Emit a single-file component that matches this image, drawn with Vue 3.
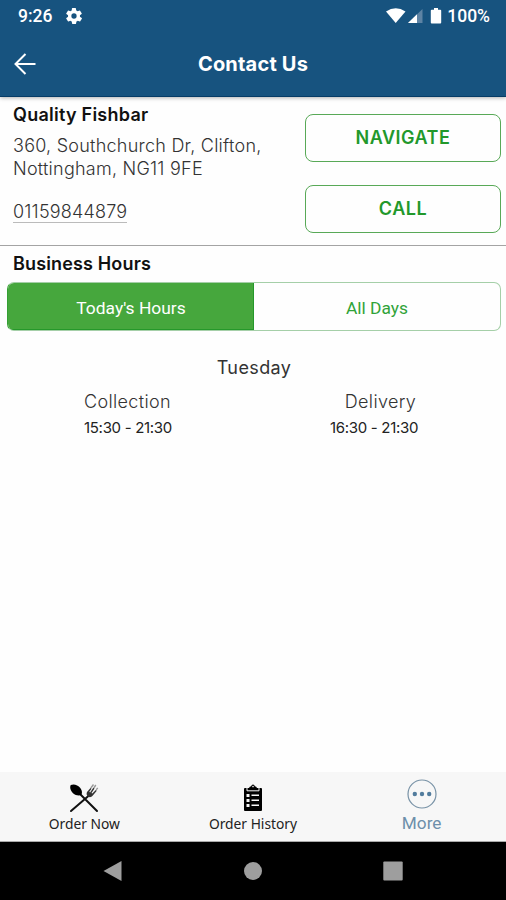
<script setup>
import { ref } from "vue"

const activeHours = ref("today")

const hours = [
  { label: "Collection", time: "15:30 - 21:30", key: "collection" },
  { label: "Delivery", time: "16:30 - 21:30", key: "delivery" },
]
</script>

<template>
  <div class="app">
    <header class="top">
      <div class="status">
        <span class="clock">9:26</span>
        <svg class="gear" viewBox="2 2 20 20">
          <path fill="#fff" fill-rule="evenodd" d="M19.4 13a7.5 7.5 0 0 0 0-2l2.1-1.6a.5.5 0 0 0 .1-.7l-2-3.4a.5.5 0 0 0-.6-.2l-2.5 1a7 7 0 0 0-1.7-1l-.4-2.6a.5.5 0 0 0-.5-.5h-4a.5.5 0 0 0-.5.5L9.2 5.1a7 7 0 0 0-1.7 1L5 5.1a.5.5 0 0 0-.6.2l-2 3.4a.5.5 0 0 0 .1.7L4.6 11a7.5 7.5 0 0 0 0 2l-2.1 1.6a.5.5 0 0 0-.1.7l2 3.4c.1.2.4.3.6.2l2.5-1a7 7 0 0 0 1.7 1l.4 2.6c0 .3.2.5.5.5h4c.3 0 .5-.2.5-.5l.4-2.6a7 7 0 0 0 1.7-1l2.5 1c.2.1.5 0 .6-.2l2-3.4a.5.5 0 0 0-.1-.7zM12 15.3a3.3 3.3 0 1 1 0-6.6 3.3 3.3 0 0 1 0 6.6z" />
        </svg>
        <svg class="signals" viewBox="0 0 58 18">
          <path fill="#fff" d="M0 4.500Q9.700-2 19.500 4.500L9.700 16Z" />
          <path fill="#5d83a4" d="M36.500 2v14H22Z" />
          <path fill="#fff" d="M31 7.300V16H22Z" />
          <path fill="#fff" d="M48 1h4v1.700h2.300q.9 0 .9.900v12q0 .9-.9.900h-8.600q-.9 0-.9-.9v-12q0-.9.900-.9H48Z" />
        </svg>
        <span class="percent">100%</span>
      </div>
      <div class="title-bar">
        <svg class="back" viewBox="0 0 22 22">
          <path fill="none" stroke="#fff" stroke-width="2" d="M21.500 11H1.500M11.500 1l-10 10 10 10" />
        </svg>
        <h1>Contact Us</h1>
      </div>
    </header>

    <section class="contact">
      <div class="details">
        <h2 class="name">Quality Fishbar</h2>
        <p class="address">
          <span class="street">360, Southchurch Dr, Clifton,</span><br />
          <span class="city">Nottingham, NG11 9FE</span>
        </p>
        <a class="phone">01159844879</a>
      </div>
      <div class="actions">
        <button class="navigate">NAVIGATE</button>
        <button class="call">CALL</button>
      </div>
    </section>

    <section class="business">
      <h2>Business Hours</h2>
      <div class="tabs">
        <button :class="{ active: activeHours === 'today' }" @click="activeHours = 'today'">
          Today's Hours
        </button>
        <button :class="{ active: activeHours === 'all' }" @click="activeHours = 'all'">
          All Days
        </button>
      </div>
      <p class="day">Tuesday</p>
      <div class="hours">
        <div v-for="item in hours" :key="item.key" :class="item.key">
          <p class="label">{{ item.label }}</p>
          <p class="time">{{ item.time }}</p>
        </div>
      </div>
    </section>

    <nav class="menu">
      <a class="menu-item">
        <svg viewBox="0 0 30 30">
          <path stroke="#111" stroke-width="2" stroke-linecap="round" d="M10 9l18 18M20 11.500L2 27" />
          <path fill="#000" d="M1.800 1C4.500-.3 9 .7 11.300 4c2 2.700 2 5.200 1 6.700-1.800 1.300-5.500 1-8.300-1.500C1.300 6.700.5 3 1.800 1Z" />
          <path fill="#333" d="M18 8l3.500-4 1 .8-2.200 3 .8.6 3.200-4.700 1.200.7-3 4.500.8.6 3.500-3.600 1 .8-4 4.900c-1.500 1.800-3.200 1.900-4.600 1.100-1.500-.9-2-3-1.200-4.700Z" />
          <path stroke="#999" stroke-width="1.400" d="M21.800 4l2.700-3.500M24.800 4l2-3M27.200 5.800l1.500-2" />
        </svg>
        <span class="order-now">Order Now</span>
      </a>
      <a class="menu-item">
        <svg viewBox="0 0 30 30">
          <path fill="#000" d="M7 4h4q.5-1.500 2.200-1.800Q13.500.5 15 .5t1.800 1.700Q18.500 2.500 19 4h4q1 0 1 1v21q0 1-1 1H7q-1 0-1-1V5q0-1 1-1Z" />
          <path fill="none" stroke="#f7f7f7" d="M9 4v2.800h12V4" />
          <circle cx="15" cy="2.600" r=".8" fill="#f7f7f7" />
          <path fill="#f7f7f7" d="M8.500 10h3v3h-3zM8.500 15h3v3h-3zM8.500 20h3v3h-3zM13.500 10.500h7.500V12h-7.500zM13.500 15.500h7.500V17h-7.500zM13.500 20.500h7.500V22h-7.500z" />
        </svg>
        <span class="order-history">Order History</span>
      </a>
      <a class="menu-item more">
        <svg viewBox="0 0 30 30">
          <circle cx="15" cy="15" r="14" fill="none" stroke="#7892a6" stroke-width="1.200" />
          <g fill="#527c9d">
            <circle cx="7.800" cy="15" r="2.200" />
            <circle cx="15" cy="15" r="2.200" />
            <circle cx="22.200" cy="15" r="2.200" />
          </g>
        </svg>
        <span>More</span>
      </a>
    </nav>

    <footer class="system">
      <svg viewBox="0 0 20 22"><path fill="#9e9e9e" d="M18.500 1v20L.5 11Z" /></svg>
      <svg viewBox="0 0 20 22"><circle cx="10" cy="11" r="9" fill="#9e9e9e" /></svg>
      <svg viewBox="0 0 20 22"><rect x=".3" y="1.500" width="19.400" height="19" rx="1" fill="#9e9e9e" /></svg>
    </footer>
  </div>
</template>

<style>
body {
  margin: 0;
  background: #fff;
}
</style>

<style scoped>
* {
  box-sizing: border-box;
}

.app {
  height: 900px;
  display: flex;
  flex-direction: column;
  overflow: hidden;
  background: #fefefe;
  color: #111;
  font-family: Inter, "Open Sans", sans-serif;
}

h1, h2, p {
  margin: 0;
}

button {
  font-family: inherit;
  cursor: pointer;
}

svg {
  display: block;
}

.top {
  flex: none;
  height: 97px;
  background: #17537f;
  color: #fff;
  border-bottom: 1px solid #063c67;
  box-shadow: 0 1px 4px rgba(0, 0, 0, 0.3);
}

.status {
  height: 32px;
  padding: 0 16px 0 18px;
  display: flex;
  align-items: center;
  font: 500 17.5px Roboto, sans-serif;
}

.gear {
  width: 16px;
  height: 16px;
  margin-left: 14px;
}

.signals {
  width: 58px;
  height: 18px;
  margin-left: auto;
}

.percent {
  margin-left: 3px;
}

.title-bar {
  height: 63px;
  padding: 0 14px;
  display: grid;
  grid-template-columns: 22px 1fr 22px;
  align-items: center;
}

.back {
  width: 22px;
  height: 22px;
}

h1 {
  font-size: 20px;
  font-weight: 700;
  line-height: 28px;
  letter-spacing: 0.2px;
  text-align: center;
  white-space: nowrap;
}

h2 {
  font-size: 18px;
  font-weight: 600;
  line-height: 24px;
  letter-spacing: 0.15px;
}

.contact {
  flex: none;
  height: 149px;
  padding: 6px 5px 0 13px;
  display: flex;
  justify-content: space-between;
  border-bottom: 1px solid #a4a4a4;
}

.name {
  letter-spacing: 0.25px;
}

.address {
  margin-top: 7px;
  font-size: 18px;
  font-weight: 300;
  line-height: 23px;
  letter-spacing: 0.24px;
  color: #333;
  white-space: nowrap;
}

.phone {
  display: inline-block;
  margin-top: 22px;
  font-size: 18px;
  font-weight: 300;
  line-height: 20px;
  letter-spacing: 0.2px;
  color: #333;
  border-bottom: 1px solid #bbb;
}

.actions {
  width: 196px;
  padding-top: 11px;
  display: flex;
  flex-direction: column;
  gap: 23px;
}

.actions button {
  height: 48px;
  padding: 0 0 1px;
  background: transparent;
  border: 1px solid #58a957;
  border-radius: 8px;
  color: #22982b;
  font-size: 18px;
  font-weight: 600;
  letter-spacing: 0.5px;
}

.business {
  flex: 1;
  padding: 6px 5px 0 7px;
}

.business h2 {
  padding-left: 6px;
}

.tabs {
  height: 49px;
  margin-top: 6px;
  display: grid;
  grid-template-columns: 1fr 1fr;
  border: 1px solid #a5cfa8;
  border-left-color: #35a034;
  border-radius: 7px;
  overflow: hidden;
}

.tabs button {
  padding: 2px 0 0;
  border: 0;
  background: transparent;
  color: #30a338;
  font: 400 17.4px Roboto, sans-serif;
}

.tabs button.active {
  color: #fff;
  background: #46a73d;
  box-shadow: inset -1px -1px #25982a;
}

.day {
  margin-top: 25px;
  font-size: 18px;
  line-height: 24px;
  letter-spacing: 0.4px;
  text-align: center;
  color: #333;
}

.hours {
  display: grid;
  grid-template-columns: 241px 1fr;
  margin-top: 10px;
  text-align: center;
}

.label {
  font-size: 18px;
  font-weight: 300;
  line-height: 24px;
  letter-spacing: 0.35px;
  color: #333;
}

.delivery .label {
  padding-left: 12px;
}

.delivery .time {
  padding-right: 1px;
}

.collection .time {
  padding-left: 1px;
}

.time {
  margin-top: 3px;
  font-size: 15px;
  line-height: 22px;
  letter-spacing: -0.3px;
  color: #222;
}

.menu {
  flex: none;
  height: 70px;
  padding-top: 8px;
  display: grid;
  grid-template-columns: repeat(3, 1fr);
  background: #f7f7f7;
  border-bottom: 1px solid #aaa;
}

.menu-item {
  display: flex;
  flex-direction: column;
  align-items: center;
  font: 400 13.8px/20px "Noto Sans", sans-serif;
  color: #222;
}

.menu-item svg {
  width: 30px;
  height: 30px;
  margin: 4px 0 0;
}

.more {
  font: 400 17.2px/22px Roboto, sans-serif;
  color: #6d8faa;
}

.more svg {
  margin: -1px 0 3px;
}

.system {
  flex: none;
  height: 58px;
  display: flex;
  align-items: center;
  justify-content: space-between;
  padding: 0 103px;
  background: #000;
}

.system svg {
  width: 20px;
  height: 22px;
}
</style>
